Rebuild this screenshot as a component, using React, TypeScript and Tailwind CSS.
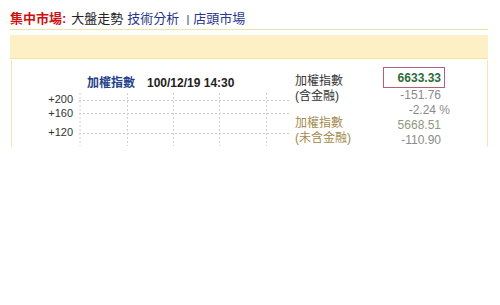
const cjk = 'font-["Liberation_Sans","Noto_Sans_CJK_TC",sans-serif]';

function GridChart() {
  const rows = [7, 20, 40];
  const cols = [0.5, 48, 94, 140, 187];
  return (
    <svg width="212" height="53" className="block">
      {rows.map((y) => (
        <line key={'h' + y} x1="0" x2="212" y1={y + 0.5} y2={y + 0.5} stroke="#c8c8c8" strokeDasharray="2 2" />
      ))}
      {cols.map((x) => (
        <line key={'v' + x} x1={x + 0.5} x2={x + 0.5} y1="0" y2="53" stroke="#d0d0d0" strokeDasharray="2 2" />
      ))}
    </svg>
  );
}

export default function App() {
  return (
    <div className={`w-[500px] h-[305px] bg-white ${cjk}`}>
      {/* breadcrumb */}
      <div className="h-[29px] pl-[10px] pt-[9px] text-[13px] leading-[14px] flex items-center">
        <span className="text-[#cc1010] font-bold">集中市場:</span>
        <span className="ml-[5px] text-[#222]">大盤走勢</span>
        <span className="ml-[4px] text-[#27368a]">技術分析</span>
        <span className="ml-[7px] text-[#27368a] text-[11px]">|</span>
        <span className="ml-[4px] text-[#27368a]">店頭市場</span>
      </div>
      <div className="mx-[10px] w-[478px] border-t border-[#efe3a8]" />
      <div className="mt-[5px] ml-[10px] w-[478px] h-[24px] bg-[#fdf0c4] border-b border-[#f3e2a0]" />

      <div className="mt-[1px] ml-[11px] w-[477px] h-[87px] overflow-hidden border-x border-[#f3e6b2] flex">
        {/* chart side */}
        <div className="w-[279px] shrink-0">
          <div className="mt-[17px] h-[12px] flex items-center">
            <span className="ml-[75px] text-[12px] font-bold text-[#25408a]">加權指數</span>
            <span className="ml-[12px] text-[12px] font-bold text-[#222]">100/12/19 14:30</span>
          </div>
          <div className="mt-[4px] flex">
            <div className="w-[61px] shrink-0 text-right text-[11px] leading-[12px] text-[#333]">
              <div>+200</div>
              <div className="mt-[2px]">+160</div>
              <div className="mt-[7px]">+120</div>
            </div>
            <div className="ml-[6px]">
              <GridChart />
            </div>
          </div>
        </div>

        {/* index values */}
        <div className="ml-[4px] w-[88px] shrink-0 text-[12px] leading-[15px]">
          <div className="mt-[14px] text-[#333]">加權指數</div>
          <div className="text-[#333]">(含金融)</div>
          <div className="mt-[12px] text-[#a48a4c]">加權指數</div>
          <div className="text-[#a48a4c]">(未含金融)</div>
        </div>
        <div className="w-[67px] shrink-0 text-[12px] leading-[15px] text-right">
          <div className="mt-[7px] w-[62px] h-[21px] border border-[#b8607a] flex items-center justify-end pr-[3px] pt-[2px] font-bold text-[#2e6b3a]">
            6633.33
          </div>
          <div className="pr-[9px] text-[#8a8a8a]">-151.76</div>
          <div className="text-[#8a8a8a]">-2.24 %</div>
          <div className="pr-[9px] text-[#8e9a80]">5668.51</div>
          <div className="pr-[9px] text-[#8a8a8a]">-110.90</div>
        </div>
      </div>
    </div>
  );
}
